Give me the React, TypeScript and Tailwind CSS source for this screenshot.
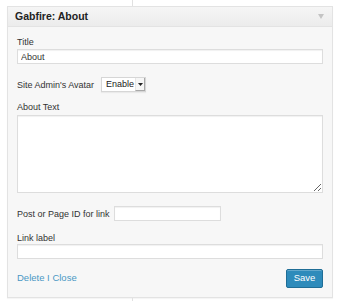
import React from "react";

// Widget settings panel, WordPress admin style
const Label = ({children, className = ""}: { children: React.ReactNode; className?: string }) => (
    <div className={`text-[9px] leading-[12px] text-[#333] ${className}`}>{children}</div>
);

const fieldCls =
    "block h-[15px] border border-[#dddddd] bg-white px-[3px] text-[9px] text-[#333] shadow-[inset_0_1px_1px_rgba(0,0,0,0.06)] outline-none";

const App = () => {
    return (
        <div className="w-[340px] h-[301px] bg-white font-['Liberation_Sans',Arial,sans-serif] overflow-hidden">
            <div className="h-[6px] ml-[132px] border-l border-[#e1e1e1]"/>

            <div className="ml-[7px] w-[326px] border border-[#e3e3e3] bg-[#f7f7f7] shadow-[0_1px_1px_rgba(0,0,0,0.04)]">
                {/* header */}
                <div
                    className="h-[20px] flex items-center justify-between pl-[7px] pr-[8px] border-b border-[#e3e3e3] bg-gradient-to-b from-[#f5f5f5] to-[#ececec]">
                    <span className="text-[10.5px] font-bold text-[#222]">Gabfire: About</span>
                    <svg width="6" height="5" viewBox="0 0 6 5">
                        <path d="M0 0 H6 L3 5 Z" fill="#c4c4c4"/>
                    </svg>
                </div>

                {/* body */}
                <div className="px-[9px] pt-[9px] pb-[9px]">
                    <Label>Title</Label>
                    <input readOnly value="About" className={`${fieldCls} w-full mt-[1px]`}/>

                    <div className="flex items-center mt-[13px] h-[15px]">
                        <Label>Site Admin's Avatar</Label>
                        <div
                            className="ml-[7px] h-[15px] w-[45px] flex items-stretch border border-[#d6d6d6] bg-white shadow-[0_1px_1px_rgba(0,0,0,0.05)]">
                            <span className="flex-1 pl-[4px] text-[9px] leading-[13px] text-[#222]">Enable</span>
                            <span
                                className="w-[10px] flex items-center justify-center bg-[#f6f6f6] border-l border-[#e6e6e6] border-b border-b-[#a8a8a8] border-r border-r-[#a8a8a8]">
                                <svg width="5" height="3" viewBox="0 0 5 3">
                                    <path d="M0 0 H5 L2.5 3 Z" fill="#222"/>
                                </svg>
                            </span>
                        </div>
                    </div>

                    <Label className="mt-[9px]">About Text</Label>
                    <textarea readOnly
                              className="block w-full h-[78px] mt-[2px] border border-[#dddddd] bg-white shadow-[inset_0_1px_1px_rgba(0,0,0,0.06)] outline-none resize-y"/>

                    <div className="flex items-center mt-[13px]">
                        <Label>Post or Page ID for link</Label>
                        <input readOnly value="" className={`${fieldCls} w-[107px] ml-[4px]`}/>
                    </div>

                    <Label className="mt-[11px]">Link label</Label>
                    <input readOnly value="" className={`${fieldCls} w-full mt-[0px]`}/>

                    <div className="flex items-center justify-between mt-[10px]">
                        <span className="text-[9.5px] text-[#4a98c4]">Delete I Close</span>
                        <button
                            className="h-[19px] w-[37px] rounded-[2px] border border-[#1f6d96] bg-[#2e8bbb] text-[9.5px] text-white shadow-[inset_0_1px_0_rgba(255,255,255,0.25)]">
                            Save
                        </button>
                    </div>
                </div>
            </div>

            <div className="h-[6px] ml-[132px] border-l border-[#e1e1e1]"/>
        </div>
    );
};

export default App;
